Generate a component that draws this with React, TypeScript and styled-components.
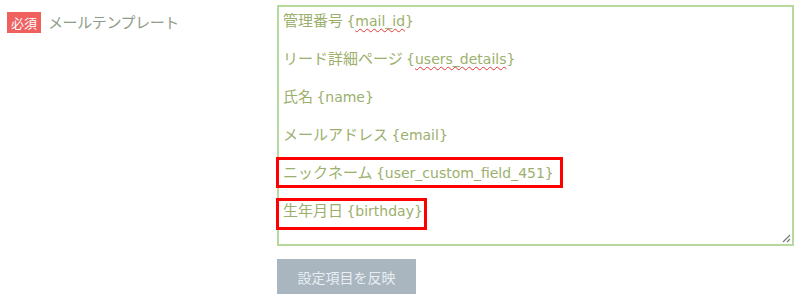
import React from 'react';
import styled, { createGlobalStyle } from 'styled-components';

const GlobalStyle = createGlobalStyle`
  html, body {
    margin: 0;
    padding: 0;
    background: #fff;
  }
  body {
    font-family: "Noto Sans CJK JP", "Noto Sans", sans-serif;
  }
`;

const FormRow = styled.div`
  display: grid;
  grid-template-columns: 277px 517px;
  width: 800px;
  height: 301px;
`;

const LabelCell = styled.div`
  display: flex;
  align-items: center;
  align-self: start;
  gap: 7px;
  padding: 11px 0 0 7px;
`;

const Required = styled.span`
  display: inline-block;
  background: #f0605f;
  color: #fff;
  font-size: 13px;
  line-height: 21px;
  padding: 0 4px;
`;

const LabelText = styled.span`
  color: #8f9c8a;
  font-size: 15px;
  letter-spacing: -0.4px;
  line-height: 22px;
`;

const FieldCell = styled.div`
  display: flex;
  flex-direction: column;
  align-items: flex-start;
  padding-top: 5px;
`;

const TextArea = styled.div`
  position: relative;
  box-sizing: border-box;
  width: 517px;
  height: 241px;
  border: 2px solid #b7d99e;
  padding: 3px 4px;
  color: #9bb06c;
  font-size: 15px;
  line-height: 19px;
`;

const Line = styled.div`
  height: 19px;
  margin-bottom: 19px;
  white-space: nowrap;
`;

const Tag = styled.span`
  font-family: "DejaVu Sans", "Noto Sans", sans-serif;
  font-size: 14px;
  line-height: 1;
`;

const Misspelled = styled.span`
  text-decoration: underline wavy #e53935;
  text-decoration-thickness: 1px;
  text-underline-offset: 2px;
`;

const Mark = styled.div<{ $top: number; $width: number; $height: number }>`
  position: absolute;
  left: -3px;
  top: ${p => p.$top}px;
  width: ${p => p.$width}px;
  height: ${p => p.$height}px;
  box-sizing: border-box;
  border: 3px solid #ff0000;
`;

const Grip = styled.svg`
  position: absolute;
  right: 1px;
  bottom: 1px;
`;

const ApplyButton = styled.button`
  margin-top: 13px;
  width: 139px;
  height: 35px;
  border: none;
  background: #a9b6c0;
  color: #e8eef2;
  font-family: "Noto Sans CJK JP", sans-serif;
  font-size: 14px;
  padding: 0;
`;

const App: React.FC = () => (
  <>
    <GlobalStyle />
    <FormRow>
      <LabelCell>
        <Required>必須</Required>
        <LabelText>メールテンプレート</LabelText>
      </LabelCell>
      <FieldCell>
        <TextArea>
          <Line>管理番号 <Tag>{'{'}<Misspelled>mail_id</Misspelled>{'}'}</Tag></Line>
          <Line>リード詳細ページ <Tag>{'{'}<Misspelled>users_details</Misspelled>{'}'}</Tag></Line>
          <Line>氏名 <Tag>{'{name}'}</Tag></Line>
          <Line>メールアドレス <Tag>{'{email}'}</Tag></Line>
          <Line>ニックネーム <Tag>{'{user_custom_field_451}'}</Tag></Line>
          <Line>生年月日 <Tag>{'{birthday}'}</Tag></Line>
          <Mark $top={150} $width={287} $height={31} />
          <Mark $top={191} $width={151} $height={32} />
          <Grip width="9" height="9" viewBox="0 0 9 9">
            <path d="M8 1 L1 8 M8 5 L5 8" stroke="#777" strokeWidth="1.2" />
          </Grip>
        </TextArea>
        <ApplyButton>設定項目を反映</ApplyButton>
      </FieldCell>
    </FormRow>
  </>
);

export default App;
